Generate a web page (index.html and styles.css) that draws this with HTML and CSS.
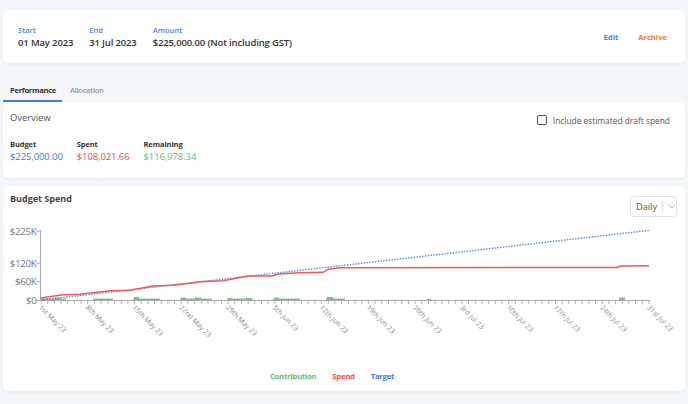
FILE: index.html
```html
<!DOCTYPE html>
<html lang="en">
<head>
<meta charset="utf-8">
<title>Budget</title>
<link rel="stylesheet" href="styles.css">
</head>
<body>
<div class="page">
  <section class="card summary">
    <div class="fields">
      <div class="field">
        <div class="field-label">Start</div>
        <div class="field-value">01 May 2023</div>
      </div>
      <div class="field">
        <div class="field-label">End</div>
        <div class="field-value">31 Jul 2023</div>
      </div>
      <div class="field">
        <div class="field-label">Amount</div>
        <div class="field-value">$225,000.00 (Not including GST)</div>
      </div>
    </div>
    <div class="actions">
      <a class="action edit">Edit</a>
      <a class="action archive">Archive</a>
    </div>
  </section>

  <nav class="tabs">
    <div class="tab active">Performance</div>
    <div class="tab">Allocation</div>
  </nav>

  <section class="card overview">
    <div class="overview-head">
      <div class="overview-title">Overview</div>
      <label class="check"><span class="box"></span><span>Include estimated draft spend</span></label>
    </div>
    <div class="stats">
      <div class="stat">
        <div class="stat-label">Budget</div>
        <div class="stat-value blue">$225,000.00</div>
      </div>
      <div class="stat">
        <div class="stat-label">Spent</div>
        <div class="stat-value red">$108,021.66</div>
      </div>
      <div class="stat">
        <div class="stat-label">Remaining</div>
        <div class="stat-value green">$116,978.34</div>
      </div>
    </div>
  </section>

  <section class="card spend">
    <div class="spend-head">
      <div class="spend-title">Budget Spend</div>
      <div class="select">
        <span class="select-text">Daily</span>
        <span class="select-sep"></span>
        <svg class="chev" width="8" height="5" viewBox="0 0 8 5"><path d="M1 1 L4 4 L7 1" fill="none" stroke="#b5b5b5" stroke-width="1"/></svg>
      </div>
    </div>
    <svg class="chart" width="682" height="153" viewBox="3 217 682 153">
      <defs>
        <pattern id="ticks" x="40.5" y="300" width="6.6813" height="4" patternUnits="userSpaceOnUse">
          <rect x="0" y="0" width="0.9" height="4" fill="#aaaaaa"/>
        </pattern>
      </defs>
      <g class="bars" fill="#74c47c">
        <rect x="42" y="298.6" width="24" height="1.4"/>
        <rect x="55" y="297.6" width="5" height="2.4"/>
        <rect x="93" y="298.6" width="20" height="1.4"/>
        <rect x="133" y="298.6" width="27" height="1.4"/>
        <rect x="134" y="297" width="5" height="3"/>
        <rect x="180" y="298.6" width="32" height="1.4"/>
        <rect x="181" y="297.6" width="5" height="2.4"/>
        <rect x="195" y="297.6" width="6" height="2.4"/>
        <rect x="227" y="298.6" width="26" height="1.4"/>
        <rect x="228" y="298" width="4" height="2"/>
        <rect x="246" y="298" width="5" height="2"/>
        <rect x="273" y="298.6" width="27" height="1.4"/>
        <rect x="274" y="297.6" width="5" height="2.4"/>
        <rect x="326" y="298.6" width="19" height="1.4"/>
        <rect x="327" y="297" width="6" height="3"/>
        <rect x="427" y="299" width="4" height="1"/>
        <rect x="619" y="297.6" width="6" height="2.4"/>
      </g>
      <line x1="40.5" y1="230" x2="40.5" y2="300.5" stroke="#aaaaaa" stroke-width="1"/>
      <line x1="40.5" y1="300.5" x2="650" y2="300.5" stroke="#aaaaaa" stroke-width="1"/>
      <rect x="40.5" y="300" width="609.5" height="4" fill="url(#ticks)"/>
      <g stroke="#aaaaaa" stroke-width="1">
        <line x1="36" y1="231" x2="41" y2="231"/>
        <line x1="36" y1="263.2" x2="41" y2="263.2"/>
        <line x1="36" y1="281.6" x2="41" y2="281.6"/>
        <line x1="36" y1="300.5" x2="41" y2="300.5"/>
      </g>
      <g class="ylab">
        <text x="36.5" y="234.5">$225K</text>
        <text x="36.5" y="266.7">$120K</text>
        <text x="36.5" y="285.1">$60K</text>
        <text x="36.5" y="304">$0</text>
      </g>
      <line x1="41" y1="300" x2="649" y2="230.4" stroke="#4a86e8" stroke-width="1.4" stroke-dasharray="1.4 1.4"/>
      <polyline fill="none" stroke="#f05a55" stroke-width="1.5" stroke-linejoin="round"
        points="41,298 63,294.7 80,294.3 110,290.7 130,290.3 137,289 153,286 173,285.3 190,283.3 200,281.7 223,280.7 248,276 272,276 278,274 300,272.7 323,272.3 328,269.3 340,267.7 617,267.5 621,266 649,265.8"/>
      <g class="xlab">
        <text transform="translate(38.5,308) rotate(45)">1st May 23</text>
        <text transform="translate(85.3,308) rotate(45)">8th May 23</text>
        <text transform="translate(132,308) rotate(45)">15th May 23</text>
        <text transform="translate(178.8,308) rotate(45)">22nd May 23</text>
        <text transform="translate(225.6,308) rotate(45)">29th May 23</text>
        <text transform="translate(272.3,308) rotate(45)">5th Jun 23</text>
        <text transform="translate(319.1,308) rotate(45)">12th Jun 23</text>
        <text transform="translate(365.9,308) rotate(45)">19th Jun 23</text>
        <text transform="translate(412.7,308) rotate(45)">26th Jun 23</text>
        <text transform="translate(459.4,308) rotate(45)">3rd Jul 23</text>
        <text transform="translate(506.2,308) rotate(45)">10th Jul 23</text>
        <text transform="translate(553,308) rotate(45)">17th Jul 23</text>
        <text transform="translate(599.7,308) rotate(45)">24th Jul 23</text>
        <text transform="translate(646.5,308) rotate(45)">31st Jul 23</text>
      </g>
    </svg>
    <div class="legend">
      <span class="legend-item green">Contribution</span>
      <span class="legend-item red">Spend</span>
      <span class="legend-item blue">Target</span>
    </div>
  </section>
</div>
</body>
</html>
```
FILE: styles.css
```css
* { box-sizing: border-box; }
html, body { margin: 0; padding: 0; }
body {
  background: #f4f7fa;
  font-family: "Open Sans", "Noto Sans", sans-serif;
  color: #333;
  width: 688px;
  height: 404px;
  overflow: hidden;
}
.page { padding: 10px 3px 0 3px; }
.card {
  background: #fff;
  border-radius: 5px;
  box-shadow: 0 1px 3px rgba(30, 50, 80, 0.07);
}
.blue { color: #3f7de6; }
.red { color: #ef4d48; }
.green { color: #6abd77; }

/* summary */
.summary {
  height: 53px;
  display: flex;
  align-items: center;
  justify-content: space-between;
  padding: 0 18px 0 15px;
}
.fields { display: flex; gap: 16px; }
.field-label {
  font-size: 7.6px;
  font-weight: 600;
  color: #4a86e8;
  line-height: 11px;
}
.field-value {
  font-size: 9.5px;
  font-weight: 600;
  letter-spacing: -0.15px;
  color: #333;
  line-height: 13px;
}
.actions { display: flex; gap: 20px; }
.action { font-size: 7.8px; font-weight: 700; letter-spacing: -0.1px; cursor: pointer; }
.edit { color: #4a86e8; }
.archive { color: #f47b3d; }

/* tabs */
.tabs { display: flex; margin-top: 17px; height: 22px; }
.tab {
  padding: 0 6px 0 7px;
  font-size: 7.7px;
  font-weight: 700;
  letter-spacing: -0.35px;
  line-height: 20px;
  color: #9a9a9a;
  border-bottom: 2px solid transparent;
}
.tab + .tab { font-weight: 600; padding-left: 8px; }
.tab.active { color: #333; border-bottom-color: #3f7de6; }

/* overview */
.overview { height: 76px; padding: 8px 15px 0 7px; }
.overview-head { display: flex; justify-content: space-between; align-items: center; height: 14px; }
.overview-title { font-size: 9.4px; font-weight: 500; color: #555; }
.check { display: flex; align-items: center; gap: 6px; font-size: 8.4px; color: #555; margin-top: 6px; }
.box { width: 10px; height: 10px; border: 1.5px solid #555; border-radius: 2px; }
.stats { display: flex; gap: 14px; margin-top: 15px; }
.stat-label { font-size: 7.5px; font-weight: 700; letter-spacing: -0.1px; color: #333; line-height: 11px; }
.stat-value { font-size: 9.5px; letter-spacing: -0.1px; line-height: 14px; }

/* spend */
.spend { margin-top: 8px; height: 205px; padding-top: 6px; }
.spend-head { display: flex; justify-content: space-between; align-items: flex-start; padding: 0 8px 0 7px; }
.spend-title { font-size: 9px; font-weight: 700; color: #444; line-height: 14px; }
.select {
  margin-top: 4px;
  height: 21px;
  width: 47px;
  border: 1px solid #e2e2e2;
  border-radius: 4px;
  display: flex;
  align-items: center;
  padding-left: 5px;
}
.select-text { font-size: 9.2px; color: #555; }
.select-sep { width: 1px; height: 11px; background: #ddd; margin: 0 5px 0 5px; }
.chart { display: block; }
.chart text { font-family: "Open Sans", "Noto Sans", sans-serif; }
.ylab text { font-size: 9.8px; fill: #777; text-anchor: end; letter-spacing: -0.35px; }
.xlab text { font-size: 7px; fill: #888; }
.legend { display: flex; justify-content: center; gap: 16px; padding-right: 24px; line-height: 12px; }
.legend-item { font-size: 7.8px; font-weight: 700; letter-spacing: -0.3px; }
```
